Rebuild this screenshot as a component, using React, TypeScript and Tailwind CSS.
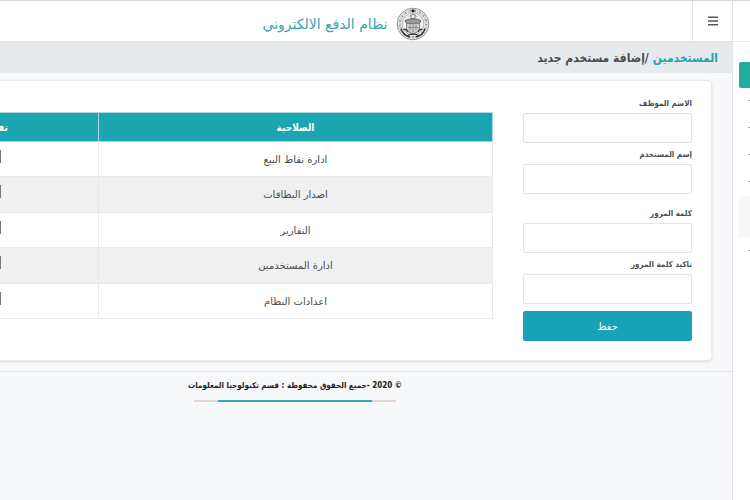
import { useState } from 'react';
import type { ReactNode } from 'react';

const fields = [
  { id: 'employee', label: 'الاسم الموظف', type: 'text', gap: false },
  { id: 'username', label: 'إسم المستخدم', type: 'text', gap: false },
  { id: 'password', label: 'كلمة المرور', type: 'password', gap: true },
  { id: 'confirm', label: 'تاكيد كلمة المرور', type: 'password', gap: false },
];

const permissions = ['ادارة نقاط البيع', 'اصدار البطاقات', 'التقارير', 'ادارة المستخدمين', 'اعدادات النظام'];

export default function App() {
  return (
    <div
      dir="rtl"
      className="flex min-h-screen overflow-hidden bg-[#f7f8fa] text-[#4b4d52] font-['DejaVu_Sans',sans-serif]"
    >
      <Sidebar />
      <div className="flex min-w-0 flex-1 flex-col">
        <Header />
        {/* the page body runs on past the left edge of the window */}
        <div className="-ml-[142px]">
          <h1 className="flex h-[31px] items-center gap-1 bg-[#e7eaec] px-3.5 font-['DejaVu_Sans_Condensed','DejaVu_Sans',sans-serif] text-xs font-bold">
            <a href="#users" className="text-[#1fa5ad]">
              المستخدمين
            </a>
            <span>/إضافة مستخدم جديد</span>
          </h1>
          <main className="mx-5 mt-[7px] flex gap-[30px] rounded-sm border border-[#e9ebed] bg-white pt-[11px] pr-[19px] pb-[19px] pl-[11px] shadow-sm">
            <UserForm />
            <PermissionsTable />
          </main>
          <Footer />
        </div>
      </div>
    </div>
  );
}

function Header() {
  return (
    <header className="flex h-[42px] border-t border-b border-t-[#d5d7d9] border-b-[#dfe1e4] bg-white">
      <button
        type="button"
        aria-label="القائمة"
        className="flex w-10 shrink-0 items-center justify-center border-l border-[#e2e4e7]"
      >
        <svg viewBox="0 0 10 10" className="size-2.5" stroke="#55595e" strokeWidth="1.4">
          <path d="M0 1.2h10M0 5h10M0 8.8h10" />
        </svg>
      </button>
      <div className="flex flex-1 items-center justify-center gap-2 pt-1.5">
        <Logo />
        <span className="text-sm text-[#3aa3ae]">نظام الدفع الالكتروني</span>
      </div>
    </header>
  );
}

function Logo() {
  return (
    <svg viewBox="0 0 34 34" className="size-[34px]" fill="none" stroke="#555">
      <circle cx="17" cy="17" r="15.8" fill="#f2f2f2" stroke="#666" strokeWidth="0.7" />
      <circle cx="17" cy="17" r="13.3" stroke="#999" strokeWidth="2.4" strokeDasharray="1.7 1.3 0.8 1.1" />
      <circle cx="17" cy="17" r="11" fill="#efefef" stroke="#888" strokeWidth="0.6" />
      <circle cx="17" cy="3.8" r="1.6" fill="#222" stroke="none" />
      <path d="M13.500 9.500q3.500-4 7 0M15 8.500v3h4v-3" stroke="#666" strokeWidth="0.8" />
      <path d="M9 13.500q8-3.500 16 0l-1.500 3h-13z" fill="#999" strokeWidth="0.8" />
      <path d="M10.500 16.500h13v7.500l-6.500 3-6.500-3z" fill="#ccc" stroke="#777" strokeWidth="0.8" />
      <path d="M14 17.500v6M17 17v8M20 17.500v6M12 20.500h10" stroke="#777" strokeWidth="0.7" />
      <path d="M5 21.500q2 7 9 8.500M29 21.500q-2 7-9 8.500" stroke="#333" strokeWidth="1.4" />
      <path d="M7.500 22.500q3-1 4.500 2.500M26.500 22.500q-3-1-4.500 2.500M11.500 28.500q5.500-3 11 0" stroke="#333" strokeWidth="1.3" />
    </svg>
  );
}

function UserForm() {
  return (
    <form className="w-[169px] shrink-0" onSubmit={(e) => e.preventDefault()}>
      {fields.map((f) => (
        <div key={f.id} className={f.gap ? 'mt-2' : ''}>
          <label
            htmlFor={f.id}
            className="block h-[21px] font-['DejaVu_Sans_Condensed','DejaVu_Sans',sans-serif] text-[8px] leading-6 font-bold"
          >
            {f.label}
          </label>
          <input
            id={f.id}
            type={f.type}
            className="block h-[30px] w-full rounded-xs border border-[#e2e4e7] bg-white px-2 text-xs outline-none focus:border-[#17a2b8]"
          />
        </div>
      ))}
      <button type="submit" className="mt-[7px] block h-[30px] w-full rounded-xs bg-[#17a2b8] text-[10px] text-white">
        حفظ
      </button>
    </form>
  );
}

function PermissionsTable() {
  return (
    <table className="mt-5 flex-1 border-collapse self-start text-center text-[10px]">
      <thead>
        <tr className="h-[29px] bg-[#1ba5b0] text-white">
          <HeadCell wide>الصلاحية</HeadCell>
          <HeadCell>تفعيل</HeadCell>
        </tr>
      </thead>
      <tbody>
        {permissions.map((name) => (
          <PermissionRow key={name} name={name} />
        ))}
      </tbody>
    </table>
  );
}

function HeadCell({ children, wide = false }: { children: ReactNode; wide?: boolean }) {
  return (
    <th
      className={`border border-[#a6dbe0] font-['DejaVu_Sans_Condensed','DejaVu_Sans',sans-serif] font-bold ${wide ? 'w-[394px]' : ''}`}
      scope="col"
    >
      {children}
    </th>
  );
}

function PermissionRow({ name }: { name: string }) {
  const [enabled, setEnabled] = useState(false);

  return (
    <tr className="h-[35px] even:h-9 even:bg-[#f0f0f0]">
      <td className="border border-[#e8e9eb]">{name}</td>
      <td className="border border-[#e8e9eb]">
        <input
          type="checkbox"
          aria-label={name}
          checked={enabled}
          onChange={(e) => setEnabled(e.target.checked)}
          className="mb-1.5 size-[13px] appearance-none border border-[#777] bg-white align-middle checked:bg-[#17a2b8]"
        />
      </td>
    </tr>
  );
}

function Footer() {
  return (
    <footer className="mt-2.5 flex flex-col items-center border-t border-[#e2e5e8] pt-2">
      <p className="font-['DejaVu_Sans_Condensed','DejaVu_Sans',sans-serif] text-[8px] leading-3 font-bold text-[#222]">
        © 2020 -جميع الحقوق محفوظة : قسم تكنولوجيا المعلومات
      </p>
      <div className="mt-2 flex h-0.5 w-[202px] items-center bg-[#e6d5d5] px-6">
        <div className="h-full w-full bg-[#35a9b3]" />
      </div>
    </footer>
  );
}

function Sidebar() {
  return (
    <nav className="w-[18px] shrink-0 overflow-hidden border-l border-[#dfe1e4] bg-white">
      <div className="h-[42px] border-t border-b border-t-[#d5d7d9] border-b-[#e6e8ea]" />
      <a href="#home" aria-label="الرئيسية" className="mt-5 ml-1.5 block h-[26px] rounded-l-xs bg-[#1fae9c]" />
      <SidebarLink label="نقاط البيع" />
      <SidebarLink label="البطاقات" />
      <SidebarLink label="التقارير" />
      <SidebarLink label="المستخدمين" />
      <div className="ml-1.5 h-[42px] bg-[#f7f8fa]" />
      <SidebarLink label="الاعدادات" />
    </nav>
  );
}

function SidebarLink({ label }: { label: string }) {
  return (
    <a href="#menu" aria-label={label} className="mb-0.5 flex h-[25px] items-center">
      <span className="h-px w-0.5 bg-[#a9adb2]" />
    </a>
  );
}
